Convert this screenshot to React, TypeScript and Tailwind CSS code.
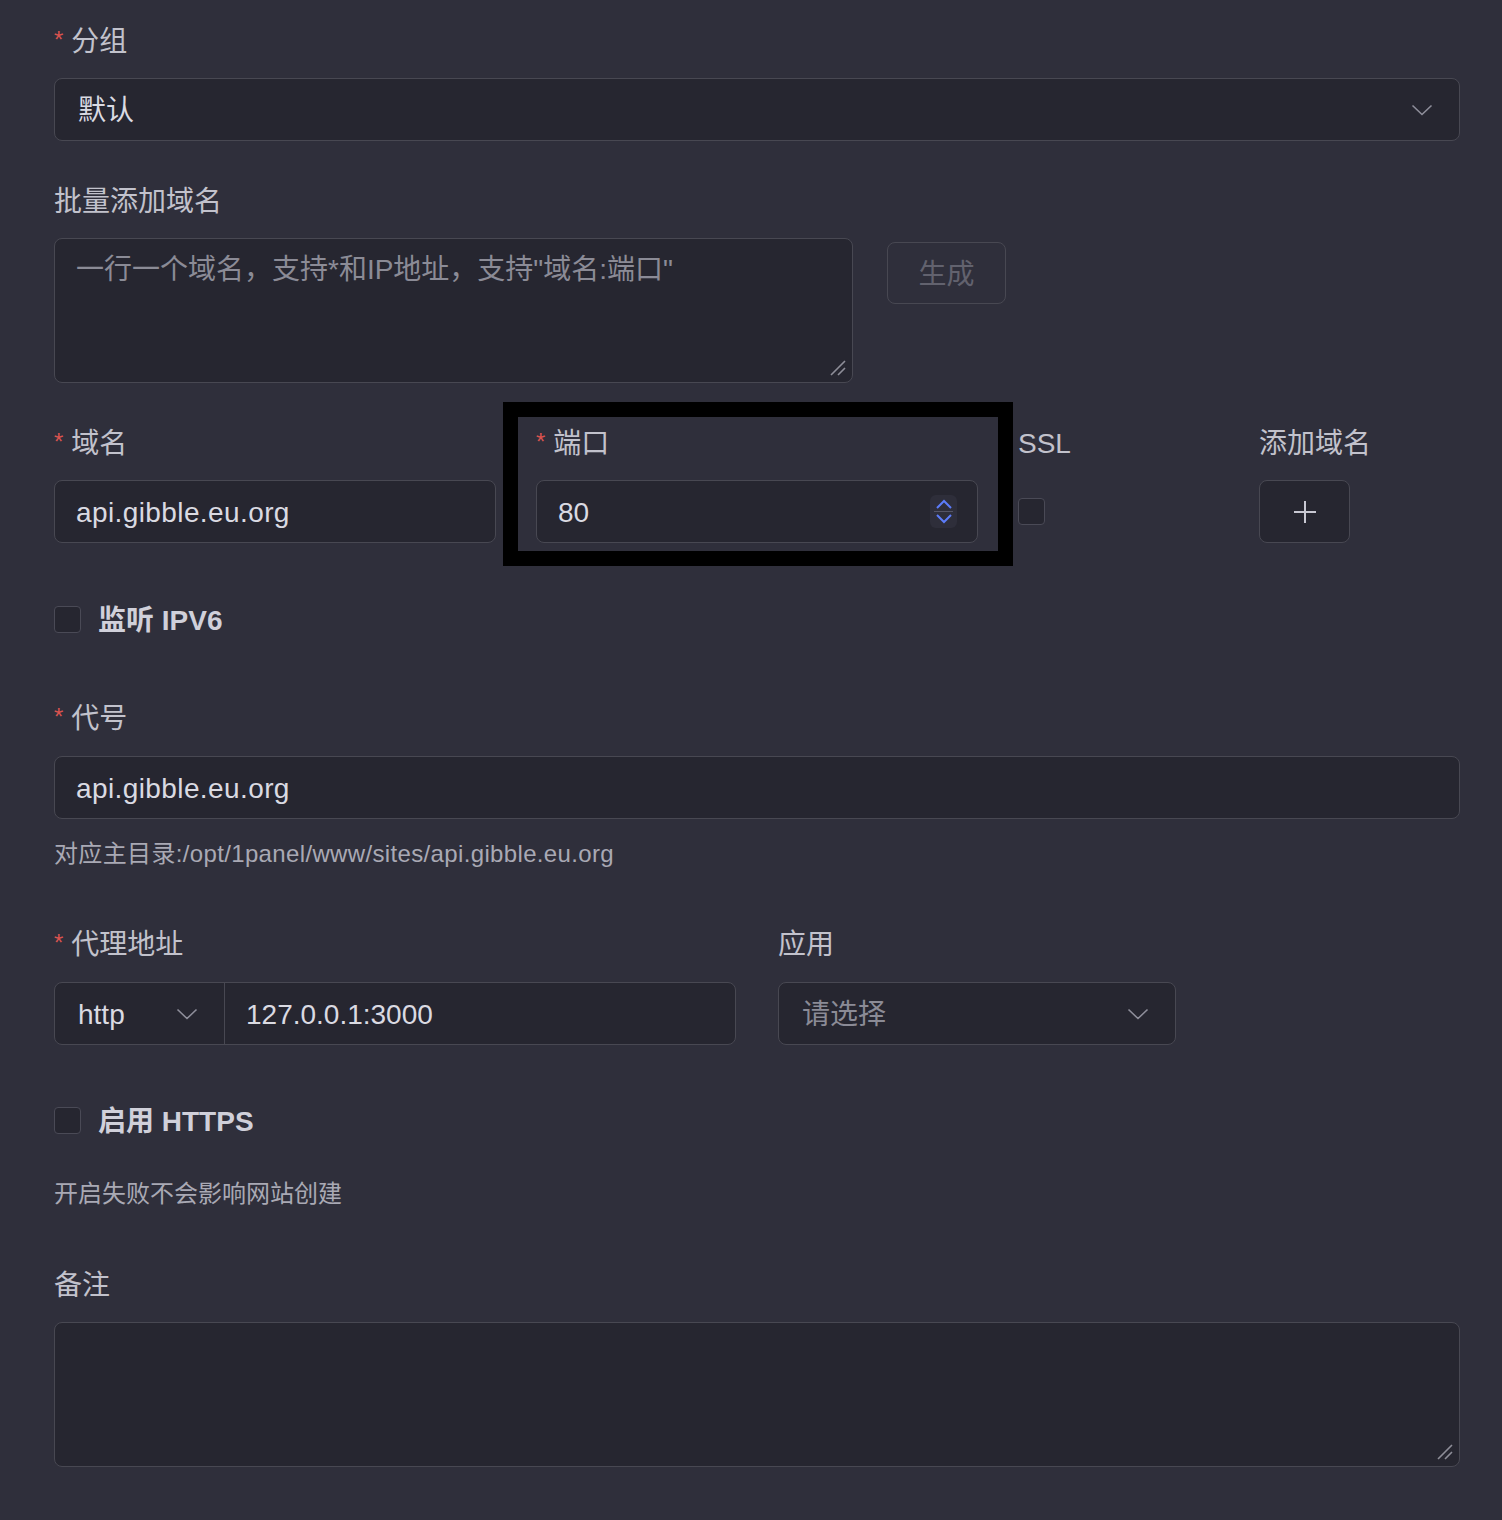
import React from "react";

const Label = ({ required, children }: { required?: boolean; children: React.ReactNode }) => (
	<div className="h-[44px] pt-[3px] flex items-center text-[28px] text-[#c2c2cc] whitespace-nowrap">
		{required && <span className="mr-[8px] text-[24px] text-[#d9534f] -translate-y-[2px]">*</span>}
		{children}
	</div>
);

const Chevron = () => (
	<svg width="22" height="12" viewBox="0 0 22 12" fill="none">
		<path d="M1.5 1.5 L11 10.5 L20.5 1.5" stroke="#8e8e9a" strokeWidth="1.6" />
	</svg>
);

const Checkbox = () => (
	<div className="w-[27px] h-[27px] rounded-[4px] border border-[#4a4a56] bg-[#262630]" />
);

const Grip = () => (
	<svg className="absolute right-[6px] bottom-[6px]" width="16" height="16" viewBox="0 0 16 16" fill="none">
		<path d="M1 15 L15 1 M8 15 L15 8" stroke="#8e8e98" strokeWidth="1.6" />
	</svg>
);

const box = "h-[63px] rounded-[8px] border border-[#484852] bg-[#262630]";

export default function App() {
	return (
		<div className="min-h-[1520px] bg-[#2f2f3b] pt-[18px] pl-[54px] pr-[42px] font-['Liberation_Sans','Noto_Sans_CJK_SC',sans-serif]">
			<Label required>分组</Label>
			<div className={`${box} mt-[16px] flex items-center justify-between pl-[23px] pr-[26px]`}>
				<span className="pt-[3px] text-[28px] text-[#dadae2]">默认</span>
				<Chevron />
			</div>

			<div className="mt-[37px]">
				<Label>批量添加域名</Label>
			</div>
			<div className="mt-[16px] flex items-start gap-[34px]">
				<div className="relative w-[799px] h-[145px] rounded-[8px] border border-[#484852] bg-[#262630] pl-[21px] pt-[11px]">
					<span className="text-[28px] text-[#8b8b96] leading-[40px]">一行一个域名，支持*和IP地址，支持"域名:端口"</span>
					<Grip />
				</div>
				<button className="mt-[4px] w-[119px] h-[62px] pt-[3px] rounded-[8px] border border-[#484852] text-[28px] text-[#62626e]">
					生成
				</button>
			</div>

			<div className="mt-[34px] -mx-[20px] grid grid-cols-[482px_482px_241px_241px]">
				<div className="px-[20px] pt-[3px] pb-[8px]">
					<Label required>域名</Label>
					<div className={`${box} mt-[16px] flex items-center pl-[21px]`}>
						<span className="pt-[3px] text-[28px] tracking-[0.4px] text-[#dadae2]">api.gibble.eu.org</span>
					</div>
				</div>
				<div className="ml-[2px] pl-[18px] pr-[20px] pt-[3px] pb-[8px] outline-solid outline-[15px] outline-black">
					<Label required>端口</Label>
					<div className={`${box} mt-[16px] flex items-center justify-between pl-[21px] pr-[20px]`}>
						<span className="pt-[3px] text-[28px] text-[#dadae2]">80</span>
						<div className="w-[27px] h-[33px] rounded-[6px] bg-[#2e2e3a] flex flex-col items-center justify-center">
							<svg width="18" height="11" viewBox="0 0 18 11" fill="none">
								<path d="M2 9 L9 2 L16 9" stroke="#5c7cfa" strokeWidth="2" />
							</svg>
							<div className="w-[19px] h-[1px] bg-[#555566] my-[1px]" />
							<svg width="18" height="11" viewBox="0 0 18 11" fill="none">
								<path d="M2 2 L9 9 L16 2" stroke="#5c7cfa" strokeWidth="2" />
							</svg>
						</div>
					</div>
				</div>
				<div className="px-[20px] pt-[3px] pb-[8px]">
					<Label>SSL</Label>
					<div className="mt-[16px] h-[63px] flex items-center">
						<Checkbox />
					</div>
				</div>
				<div className="px-[20px] pt-[3px] pb-[8px]">
					<Label>添加域名</Label>
					<div className="mt-[16px] w-[91px] h-[63px] rounded-[8px] border border-[#484852] bg-[#262630] flex items-center justify-center">
						<svg width="24" height="24" viewBox="0 0 24 24" fill="none">
							<path d="M12 1 V23 M1 12 H23" stroke="#c8c8d2" strokeWidth="2" />
						</svg>
					</div>
				</div>
			</div>

			<div className="mt-[55px] h-[27px] flex items-center">
				<Checkbox />
				<span className="ml-[17px] pt-[2px] text-[28px] font-bold text-[#d0d0da]">监听 IPV6</span>
			</div>

			<div className="mt-[62px]">
				<Label required>代号</Label>
			</div>
			<div className={`${box} mt-[17px] flex items-center pl-[21px]`}>
				<span className="pt-[3px] text-[28px] tracking-[0.4px] text-[#dadae2]">api.gibble.eu.org</span>
			</div>
			<div className="mt-[17px] h-[34px] pt-[2px] flex items-center text-[24px] tracking-[0.35px] text-[#a9a9b4]">
				对应主目录:/opt/1panel/www/sites/api.gibble.eu.org
			</div>

			<div className="mt-[51px] flex gap-[42px]">
				<div className="w-[682px]">
					<Label required>代理地址</Label>
					<div className={`${box} mt-[17px] flex`}>
						<div className="w-[170px] flex items-center justify-between pl-[23px] pr-[26px] border-r border-[#484852]">
							<span className="pt-[3px] text-[28px] text-[#dadae2]">http</span>
							<Chevron />
						</div>
						<div className="flex-1 flex items-center pl-[21px]">
							<span className="pt-[3px] text-[28px] text-[#dadae2]">127.0.0.1:3000</span>
						</div>
					</div>
				</div>
				<div className="w-[398px]">
					<Label>应用</Label>
					<div className={`${box} mt-[17px] flex items-center justify-between pl-[23px] pr-[26px]`}>
						<span className="pt-[3px] text-[28px] text-[#8b8b96]">请选择</span>
						<Chevron />
					</div>
				</div>
			</div>

			<div className="mt-[62px] h-[27px] flex items-center">
				<Checkbox />
				<span className="ml-[17px] pt-[2px] text-[28px] font-bold text-[#d0d0da]">启用 HTTPS</span>
			</div>
			<div className="mt-[42px] h-[34px] pt-[2px] flex items-center text-[24px] text-[#a9a9b4]">
				开启失败不会影响网站创建
			</div>

			<div className="mt-[52px]">
				<Label>备注</Label>
			</div>
			<div className="relative mt-[16px] h-[145px] rounded-[8px] border border-[#484852] bg-[#262630]">
				<Grip />
			</div>
		</div>
	);
}
